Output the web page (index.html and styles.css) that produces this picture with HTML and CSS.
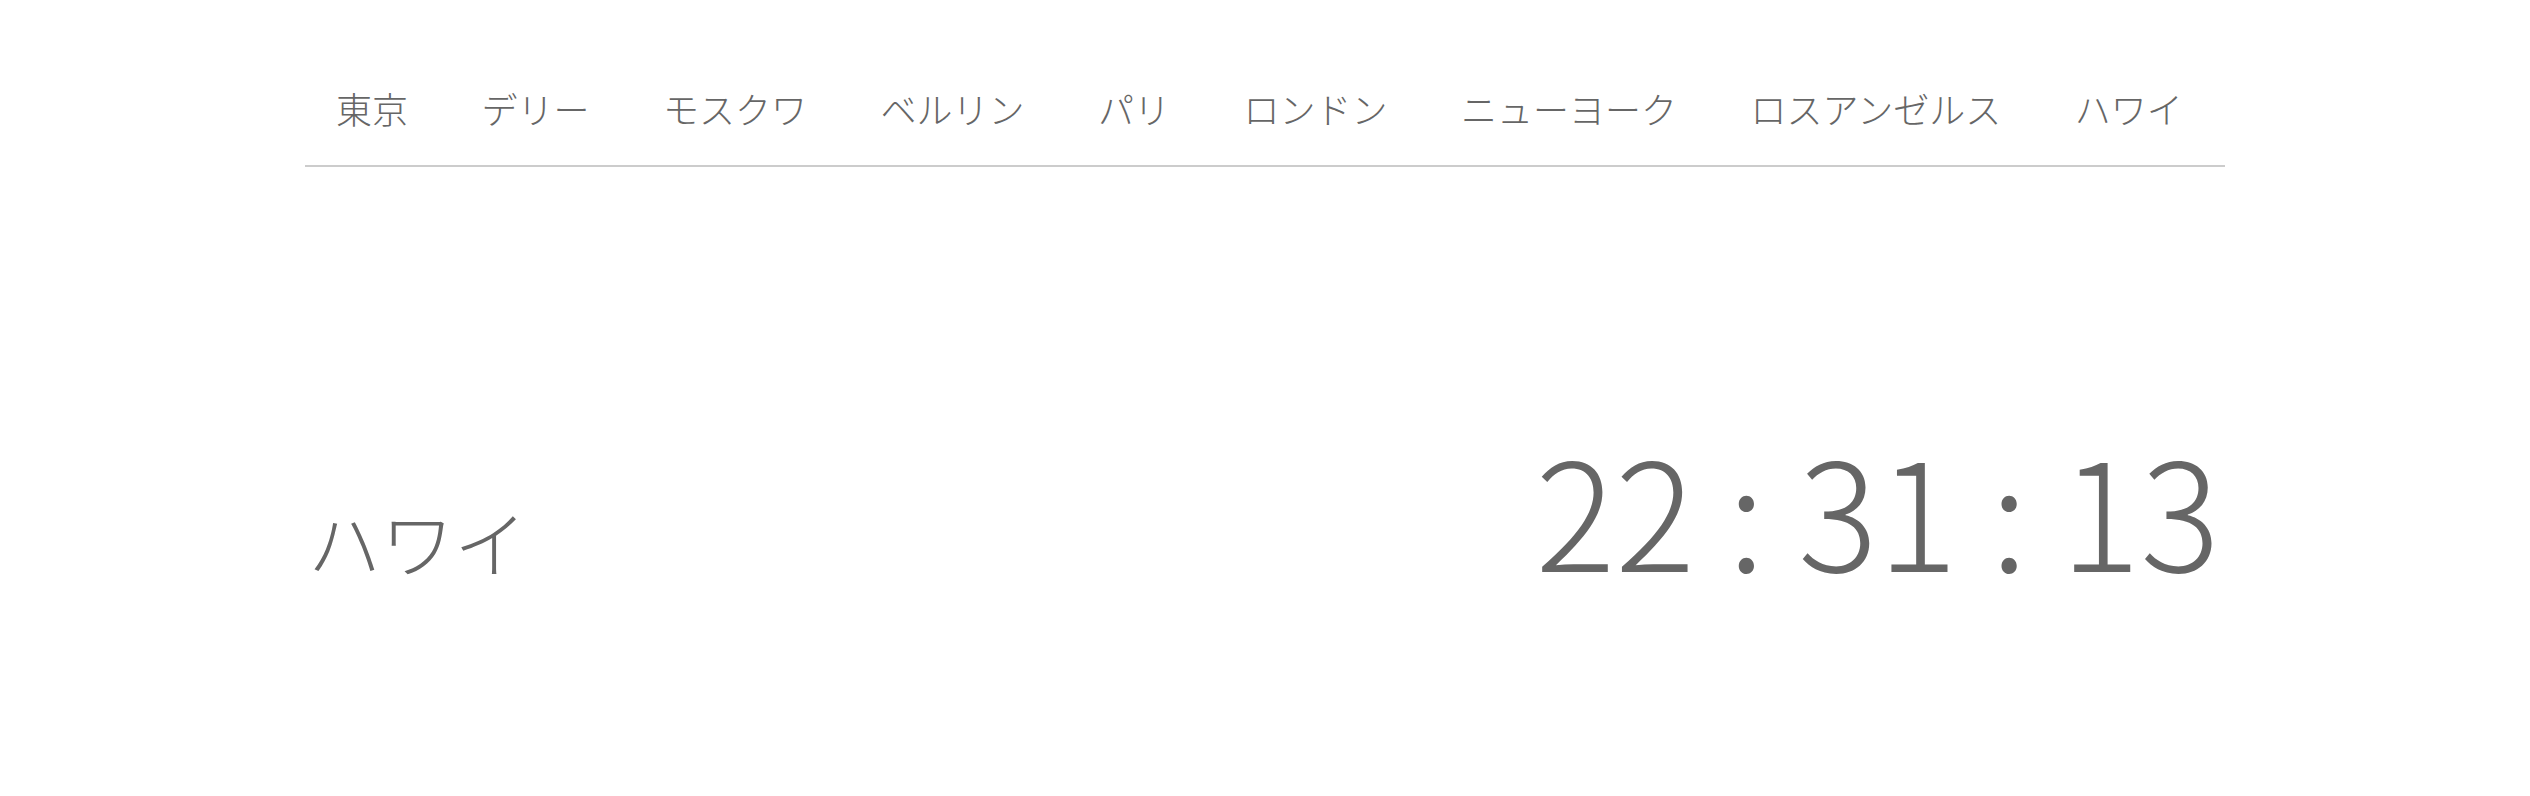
FILE: index.html
```html
<!DOCTYPE html>
<html lang="ja">
<head>
<meta charset="utf-8">
<title>World Clock</title>
<link rel="stylesheet" href="styles.css">
</head>
<body>
<div class="page">
  <nav class="cities">
    <ul class="city-list">
      <li class="city">東京</li>
      <li class="city">デリー</li>
      <li class="city">モスクワ</li>
      <li class="city">ベルリン</li>
      <li class="city">パリ</li>
      <li class="city">ロンドン</li>
      <li class="city">ニューヨーク</li>
      <li class="city">ロスアンゼルス</li>
      <li class="city">ハワイ</li>
    </ul>
  </nav>
  <main class="display">
    <div class="current-city">ハワイ</div>
    <div class="clock">22 : 31 : 13</div>
  </main>
</div>
</body>
</html>
```
FILE: styles.css
```css
html, body {
  margin: 0;
  padding: 0;
  background: #ffffff;
}

body {
  font-family: "Noto Sans CJK JP", "Noto Sans", sans-serif;
  font-weight: 300;
  color: #666666;
}

.page {
  width: 1920px;
  margin: 0 auto;
}

.cities {
  padding-top: 82px;
  border-bottom: 2px solid #cccccc;
}

.city-list {
  list-style: none;
  margin: 0;
  padding: 0 0 31px 31px;
  display: flex;
  gap: 73.5px;
}

.city {
  font-size: 36px;
  line-height: 52px;
  white-space: nowrap;
}

.display {
  display: flex;
  justify-content: space-between;
  align-items: baseline;
  padding-top: 266px;
}

.current-city {
  font-size: 73px;
  padding-left: 3px;
}

.clock {
  font-size: 149px;
  line-height: 1;
  padding-right: 5px;
}
```
